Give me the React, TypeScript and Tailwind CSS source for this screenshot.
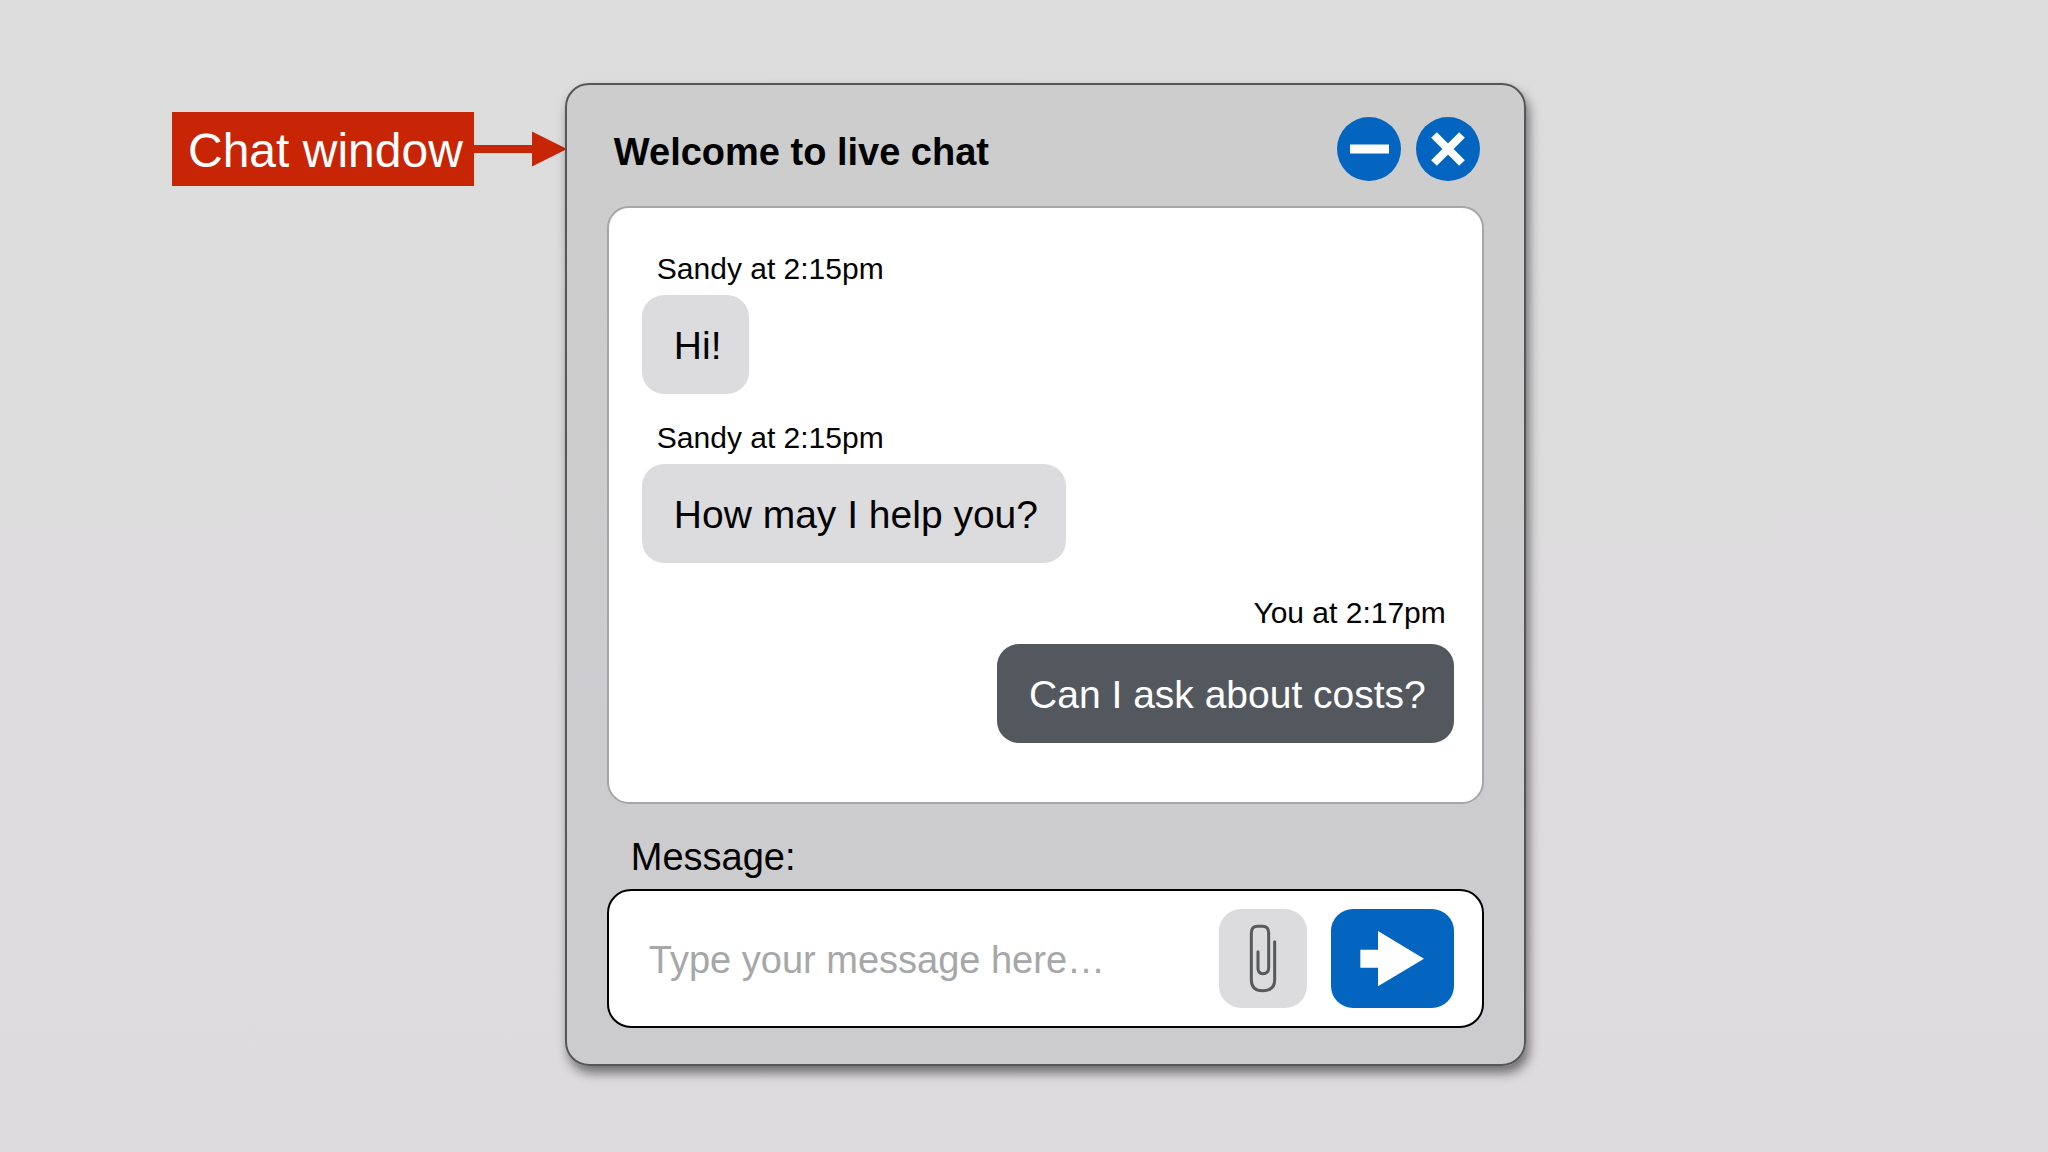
import React, { useState } from "react";

type Message = {
  id: number;
  author: string;
  time: string;
  text: string;
  own?: boolean;
};

const messages: Message[] = [
  { id: 1, author: "Sandy", time: "2:15pm", text: "Hi!" },
  { id: 2, author: "Sandy", time: "2:15pm", text: "How may I help you?" },
  { id: 3, author: "You", time: "2:17pm", text: "Can I ask about costs?", own: true },
];

function Callout() {
  return (
    <div className="mt-[29px] flex shrink-0 items-center">
      <div className="bg-[#c82506] pt-[11px] pr-[11px] pb-[7px] pl-4 text-[48px] leading-[56px] whitespace-nowrap text-white">
        Chat window
      </div>
      <svg className="-mr-0.5 h-9 w-[93px]" viewBox="0 0 93 36" aria-hidden="true">
        <path d="M0 14H58V0.5L93 18L58 35.5V22H0Z" fill="#c82506" />
      </svg>
    </div>
  );
}

function Header() {
  return (
    <header className="flex items-center gap-[15px] pr-1 pl-[7px]">
      <h1 className="flex-1 pt-1.5 text-[38px] leading-[48px] font-bold text-black">Welcome to live chat</h1>
      <button type="button" aria-label="Minimise chat" className="size-16 rounded-full bg-[#0365c0]">
        <svg viewBox="0 0 64 64" className="size-16" aria-hidden="true">
          <path d="M13 32H52" stroke="#fff" strokeWidth="9" />
        </svg>
      </button>
      <button type="button" aria-label="Close chat" className="size-16 rounded-full bg-[#0365c0]">
        <svg viewBox="0 0 64 64" className="size-16" aria-hidden="true">
          <path d="M18 18L46 46M46 18L18 46" stroke="#fff" strokeWidth="8" />
        </svg>
      </button>
    </header>
  );
}

function Bubble({ message }: { message: Message }) {
  const { author, time, text, own } = message;
  return (
    <li className={own ? "mt-8 flex flex-col items-end gap-[13px]" : "mt-[26px] flex flex-col items-start gap-2 first:mt-0"}>
      <span className={own ? "pr-2 text-[30px] leading-9" : "pl-[15px] text-[30px] leading-9"}>
        {author} at {time}
      </span>
      <p
        className={
          own
            ? "rounded-[22px] bg-[#53585f] pt-[27px] pr-7 pb-6 pl-8 text-[39px] leading-[48px] text-white"
            : "rounded-[22px] bg-[#dcdcde] pt-[27px] pr-7 pb-6 pl-8 text-[39px] leading-[48px]"
        }
      >
        {text}
      </p>
    </li>
  );
}

function Composer() {
  const [draft, setDraft] = useState("");
  return (
    <form className="mt-7" onSubmit={(e) => e.preventDefault()}>
      <label htmlFor="message" className="block pt-px pl-6 text-[38px] leading-[48px]">
        Message:
      </label>
      <div className="mt-2 flex items-center gap-6 rounded-[24px] border-2 border-black bg-white py-[18px] pr-7 pl-10">
        <input
          id="message"
          type="text"
          value={draft}
          onChange={(e) => setDraft(e.target.value)}
          placeholder="Type your message here…"
          className="h-16 min-w-0 flex-1 bg-transparent pt-1 text-[38px] outline-none placeholder:text-[#a6a7a9]"
        />
        <button type="button" aria-label="Attach a file" className="shrink-0 rounded-[22px] bg-[#dcdcde]">
          <svg viewBox="0 0 264 297" className="h-[99px] w-[88px]" aria-hidden="true">
            <path
              d="M117 128V178Q117 194 131 194Q149 194 149 176V72Q149 52 130 52H116Q97 52 97 72V212Q97 245 131 245Q167 245 167 212V98"
              fill="none"
              stroke="#58595b"
              strokeWidth="9"
              strokeLinecap="round"
            />
          </svg>
        </button>
        <button type="submit" aria-label="Send message" className="shrink-0 rounded-[22px] bg-[#0365c0]">
          <svg viewBox="0 0 369 297" className="h-[99px] w-[123px]" aria-hidden="true">
            <path d="M88 122H141V66L279 149L141 232V176H88Z" fill="#fff" />
          </svg>
        </button>
      </div>
    </form>
  );
}

export default function App() {
  return (
    <main className="flex min-h-screen items-start bg-linear-to-b from-[#dddddd] to-[#dedbde] pt-[83px] pb-20 pl-[172px] font-['Liberation_Sans',Arial,sans-serif] text-[#030303]">
      <Callout />
      <section
        aria-label="Live chat"
        className="max-w-[961px] min-w-0 flex-1 rounded-[24px] border-2 border-[#565658] bg-linear-to-b from-[#cdcdcd] to-[#cccbce] px-10 pt-8 pb-9 shadow-[3px_7px_11px_rgba(0,0,0,0.5)]"
      >
        <Header />
        <ul className="mt-[25px] rounded-[22px] border-2 border-[#a6a6a9] bg-white pt-[43px] pr-7 pb-[59px] pl-[33px]">
          {messages.map((m) => (
            <Bubble key={m.id} message={m} />
          ))}
        </ul>
        <Composer />
      </section>
    </main>
  );
}
